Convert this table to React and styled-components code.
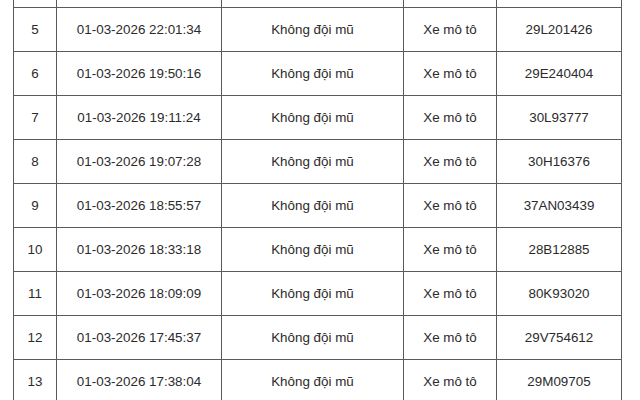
import React from "react";
import styled, { createGlobalStyle } from "styled-components";

const Global = createGlobalStyle`
  html, body { margin: 0; padding: 0; background: #ffffff; }
  body { font-family: "Liberation Sans", Arial, sans-serif; }
`;

const Page = styled.div`
  width: 640px;
  height: 400px;
  overflow: hidden;
  background: #fff;
  padding-left: 13px;
  box-sizing: border-box;
`;

const Table = styled.table`
  border-collapse: collapse;
  table-layout: fixed;
  width: 609px;
  font-family: "Liberation Sans", Arial, sans-serif;
  font-size: 13.4px;
  color: #2b2b2b;
`;

const Col = styled.col`
  width: ${(p) => p.$w}px;
`;

const Row = styled.tr`
  height: ${(p) => p.$h}px;
`;

const Cell = styled.td`
  border: 1px solid #5a5a5a;
  border-top: ${(p) => (p.$open ? "none" : "1px solid #5a5a5a")};
  text-align: center;
  vertical-align: middle;
  padding: 0;
`;

const widths = [43, 165, 182, 93, 125];

const rows = [
  ["5", "01-03-2026 22:01:34", "29L201426"],
  ["6", "01-03-2026 19:50:16", "29E240404"],
  ["7", "01-03-2026 19:11:24", "30L93777"],
  ["8", "01-03-2026 19:07:28", "30H16376"],
  ["9", "01-03-2026 18:55:57", "37AN03439"],
  ["10", "01-03-2026 18:33:18", "28B12885"],
  ["11", "01-03-2026 18:09:09", "80K93020"],
  ["12", "01-03-2026 17:45:37", "29V754612"],
  ["13", "01-03-2026 17:38:04", "29M09705"],
];

export default function App() {
  return (
    <Page>
      <Global />
      <Table>
        <colgroup>
          {widths.map((w, i) => (
            <Col key={i} $w={w} />
          ))}
        </colgroup>
        <tbody>
          <Row $h={7}>
            {widths.map((w, i) => (
              <Cell key={i} $open />
            ))}
          </Row>
          {rows.map(([n, t, plate]) => (
            <Row key={n} $h={44}>
              <Cell>{n}</Cell>
              <Cell>{t}</Cell>
              <Cell>Không đội mũ</Cell>
              <Cell>Xe mô tô</Cell>
              <Cell>{plate}</Cell>
            </Row>
          ))}
        </tbody>
      </Table>
    </Page>
  );
}
